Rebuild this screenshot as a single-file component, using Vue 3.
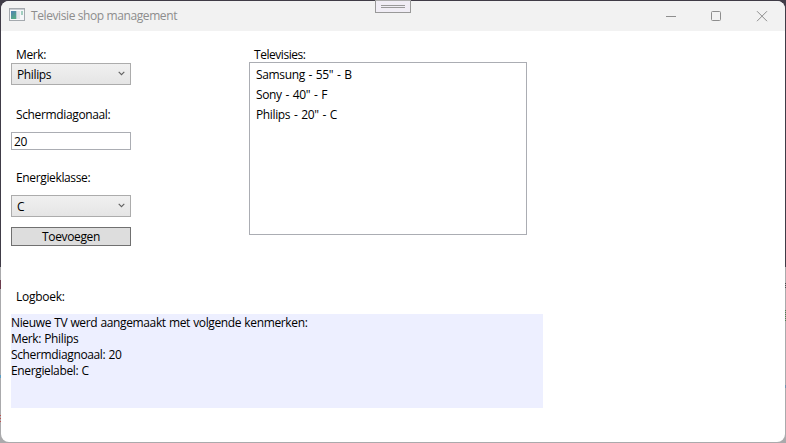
<script setup>
import { ref } from 'vue'

const merk = ref('Philips')
const diagonaal = ref('20')
const klasse = ref('C')
const televisies = ref(['Samsung - 55" - B', 'Sony - 40" - F', 'Philips - 20" - C'])
const logboek = ref([
  'Nieuwe TV werd aangemaakt met volgende kenmerken:',
  'Merk: Philips',
  'Schermdiagnoaal: 20',
  'Energielabel: C',
])
</script>

<template>
  <div class="desktop">
    <div class="window">
      <header class="titlebar">
        <svg class="app-icon" width="16" height="14" viewBox="0 0 16 14">
          <defs>
            <linearGradient id="pane" x1="0" y1="0" x2="0.5" y2="1">
              <stop offset="0" stop-color="#4f80b5" />
              <stop offset="1" stop-color="#55a986" />
            </linearGradient>
          </defs>
          <rect x="0.5" y="0.5" width="15" height="12" fill="#f6f7f9" stroke="#a4a9ae" />
          <path d="M1 1.5h14" stroke="#c9cdd2" />
          <rect x="2" y="3" width="5" height="8" fill="url(#pane)" />
          <rect x="7" y="3" width="1" height="8" fill="#b9cdd4" />
          <rect x="8" y="3" width="3" height="8" fill="#e2e5e9" />
          <rect x="12" y="3" width="2" height="4" fill="#a3cfc0" />
        </svg>
        <h1 class="title">Televisie shop management</h1>
        <div class="controls">
          <svg width="46" height="29" viewBox="0 0 46 29"><path d="M12 14.5h10" /></svg>
          <svg width="46" height="29" viewBox="0 0 46 29"><rect x="11.5" y="9.5" width="9" height="9" rx="1" /></svg>
          <svg width="46" height="29" viewBox="0 0 46 29"><path d="M11 9.2l10 10M21 9.2l-10 10" /></svg>
        </div>
      </header>
      <main class="content">
        <div class="top">
          <form class="form" @submit.prevent>
            <div class="label">Merk:</div>
            <div class="combo">
              <span>{{ merk }}</span>
              <svg width="7" height="5" viewBox="0 0 7 5"><path d="M0.7 0.8L3.5 3.6L6.3 0.8" /></svg>
            </div>
            <div class="label scherm">Schermdiagonaal:</div>
            <div class="input">{{ diagonaal }}</div>
            <div class="label energie">Energieklasse:</div>
            <div class="combo">
              <span>{{ klasse }}</span>
              <svg width="7" height="5" viewBox="0 0 7 5"><path d="M0.7 0.8L3.5 3.6L6.3 0.8" /></svg>
            </div>
            <button class="add">Toevoegen</button>
          </form>
          <section class="tvs">
            <div class="label tv-label">Televisies:</div>
            <ul class="list">
              <li v-for="tv in televisies" :key="tv">{{ tv }}</li>
            </ul>
          </section>
        </div>
        <div class="label log-label">Logboek:</div>
        <div class="log">
          <div v-for="(regel, i) in logboek" :key="i">{{ regel }}</div>
        </div>
      </main>
    </div>
    <div class="handle"></div>
  </div>
</template>

<style>
body {
  margin: 0;
  overflow: hidden;
}
</style>

<style scoped>
.desktop {
  position: relative;
  box-sizing: border-box;
  width: 786px;
  height: 443px;
  padding: 1px;
  background:
    linear-gradient(#6b3c4e, #6b3c4e) 0 280px / 1px 9px no-repeat,
    linear-gradient(#5d9fc4, #5d9fc4) 0 375px / 1px 3px no-repeat,
    repeating-linear-gradient(#c0504d 0 1px, #aaaaac 1px 3px) 0 415px / 1px 7px no-repeat,
    repeating-linear-gradient(#4a4a4e 0 1px, #aaaaac 1px 2px) 785px 283px / 1px 6px no-repeat,
    repeating-linear-gradient(#4d7a50 0 1px, #aaaaac 1px 2px) 785px 310px / 1px 11px no-repeat,
    linear-gradient(#7093ad, #7093ad) 785px 385px / 1px 3px no-repeat,
    linear-gradient(#403c47 0 267px, #aaaaac 267px);
  font-family: "Open Sans", "Noto Sans", sans-serif;
  font-size: 12px;
  letter-spacing: -0.36px;
  line-height: 16px;
  color: #000;
}
.window {
  height: 441px;
  border-radius: 8px;
  overflow: hidden;
  background: #fff;
}
.titlebar {
  display: flex;
  align-items: center;
  height: 30px;
  box-sizing: border-box;
  padding-left: 8px;
  background: #f2f2f2;
}
.app-icon {
  margin: 0 6px 2px 0;
}
.title {
  margin: 0;
  font-size: 12px;
  font-weight: 400;
  letter-spacing: -0.4px;
  color: #8d8d8d;
}
.controls {
  display: flex;
  margin-left: auto;
  margin-right: -7px;
}
.controls svg {
  fill: none;
  stroke: #8e8e8e;
}
.content {
  padding: 16px 10px 0;
}
.top {
  display: flex;
  gap: 118px;
  height: 242px;
}
.form {
  width: 120px;
}
.label {
  height: 16px;
  padding-left: 5px;
  white-space: nowrap;
}
.combo {
  display: flex;
  align-items: center;
  justify-content: space-between;
  box-sizing: border-box;
  height: 22px;
  padding: 2px 5px 0;
  border: 1px solid #acacac;
  background: linear-gradient(#f0f0f0, #e5e5e5);
}
.combo svg {
  margin-bottom: 3px;
  fill: none;
  stroke: #606060;
  stroke-width: 1.1;
}
.scherm {
  margin-top: 22px;
}
.input {
  box-sizing: border-box;
  height: 18px;
  margin-top: 9px;
  padding: 1px 0 0 2px;
  border: 1px solid #abadb3;
}
.energie {
  margin: 20px 0 9px;
}
.add {
  display: block;
  box-sizing: border-box;
  width: 120px;
  height: 19px;
  margin-top: 10px;
  padding: 1px 0 0;
  border: 1px solid #707070;
  background: #ddd;
  font: inherit;
  letter-spacing: inherit;
  color: #000;
}
.tvs {
  width: 278px;
}
.tv-label {
  letter-spacing: -0.45px;
}
.log-label {
  letter-spacing: -0.25px;
}
.list {
  box-sizing: border-box;
  height: 173px;
  margin: -1px 0 0;
  padding: 2px 6px;
  border: 1px solid #abadb3;
  list-style: none;
  line-height: 20px;
  word-spacing: 1px;
}
.log {
  box-sizing: border-box;
  width: 532px;
  height: 94px;
  margin-top: 9px;
  padding-top: 1px;
  background: #edefff;
  word-spacing: 0.4px;
}
.handle {
  position: absolute;
  left: 375px;
  top: 0;
  box-sizing: border-box;
  width: 36px;
  height: 13px;
  border: 1px solid #999;
  border-top-color: #aaa;
  background: #f0edf5;
}
.handle::after {
  content: "";
  display: block;
  box-sizing: border-box;
  width: 24px;
  height: 3px;
  margin: 4px auto 0;
  border: solid #999;
  border-width: 1px 0;
}
</style>
